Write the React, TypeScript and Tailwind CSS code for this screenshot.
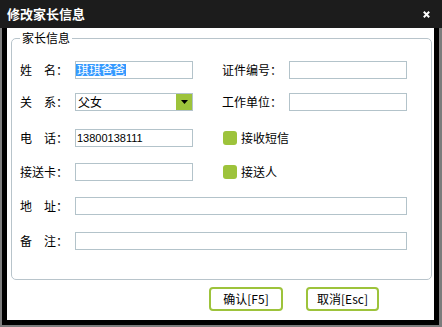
import React from "react";

const box = "h-[18px] border border-[#b3c3ca] bg-white box-border";

function Check({ label }: { label: string }) {
  return (
    <div className="ml-[30px] flex items-center">
      <span className="w-[14px] h-[14px] rounded-[3px] bg-[#9dc33b]" />
      <span className="ml-[4px] leading-[14px]">{label}</span>
    </div>
  );
}

export default function App() {
  return (
    <div className="w-[442px] h-[327px] flex flex-col font-['Noto_Sans_CJK_SC','Liberation_Sans',sans-serif] text-[12px] text-black">
      <div className="h-[28px] bg-[#1c1c1c] flex items-center justify-between pl-[7px] pr-[12px]">
        <span className="text-white font-bold text-[13px] leading-[14px]">修改家长信息</span>
        <svg width="7" height="7" viewBox="0 0 7 7">
          <path d="M0.8 0.8L6.2 6.2M6.2 0.8L0.8 6.2" stroke="#fff" strokeWidth="2" />
        </svg>
      </div>
      <div className="flex-1 bg-[#7c7c7c] pl-[2px] pr-[3px] pb-[2px] flex">
        <div className="flex-1 border-x-[5px] border-b-[5px] border-black bg-white flex flex-col">
          <fieldset className="mt-[4px] ml-[4px] mr-[2px] border border-[#b8c4cb] rounded-[5px] pl-[8px] pb-[29px]">
            <legend className="px-[2px] leading-[12px]">家长信息</legend>
            <div className="flex items-center h-[18px] mt-[17px]">
              <span className="w-[55px]">姓　名：</span>
              <div className={`${box} w-[118px] flex items-center`}>
                <span className="bg-[#3399ff] text-white leading-[12px] px-[1px]">琪琪爸爸</span>
              </div>
              <span className="ml-[29px] w-[67px]">证件编号：</span>
              <div className={`${box} w-[118px]`} />
            </div>
            <div className="flex items-center h-[18px] mt-[14px]">
              <span className="w-[55px]">关　系：</span>
              <div className={`${box} w-[118px] flex items-stretch`}>
                <span className="flex-1 pl-[2px] leading-[16px]">父女</span>
                <div className="w-[16px] bg-[#9dc33b] flex items-center justify-center">
                  <svg width="7" height="4" viewBox="0 0 7 4">
                    <path d="M0 0H7L3.5 4Z" fill="#000" />
                  </svg>
                </div>
              </div>
              <span className="ml-[29px] w-[67px]">工作单位：</span>
              <div className={`${box} w-[118px]`} />
            </div>
            <div className="flex items-center h-[18px] mt-[18px]">
              <span className="w-[55px]">电　话：</span>
              <div className={`${box} w-[118px] flex items-center pl-[1px]`}>
                <span className="font-['Liberation_Sans',sans-serif] text-[11px] leading-[16px]">13800138111</span>
              </div>
              <Check label="接收短信" />
            </div>
            <div className="flex items-center h-[18px] mt-[16px]">
              <span className="w-[55px]">接送卡：</span>
              <div className={`${box} w-[118px]`} />
              <Check label="接送人" />
            </div>
            <div className="flex items-center h-[18px] mt-[16px]">
              <span className="w-[55px]">地　址：</span>
              <div className={`${box} w-[332px]`} />
            </div>
            <div className="flex items-center h-[18px] mt-[17px]">
              <span className="w-[55px]">备　注：</span>
              <div className={`${box} w-[332px]`} />
            </div>
          </fieldset>
          <div className="flex mt-[7px] ml-[202px] gap-[23px]">
            <button className="w-[74px] h-[24px] border-2 border-[#9dc33b] rounded-[4px] bg-white flex items-center justify-center leading-[12px]">
              确认[F5]
            </button>
            <button className="w-[73px] h-[24px] border-2 border-[#9dc33b] rounded-[4px] bg-white flex items-center justify-center leading-[12px]">
              取消[Esc]
            </button>
          </div>
        </div>
      </div>
    </div>
  );
}
